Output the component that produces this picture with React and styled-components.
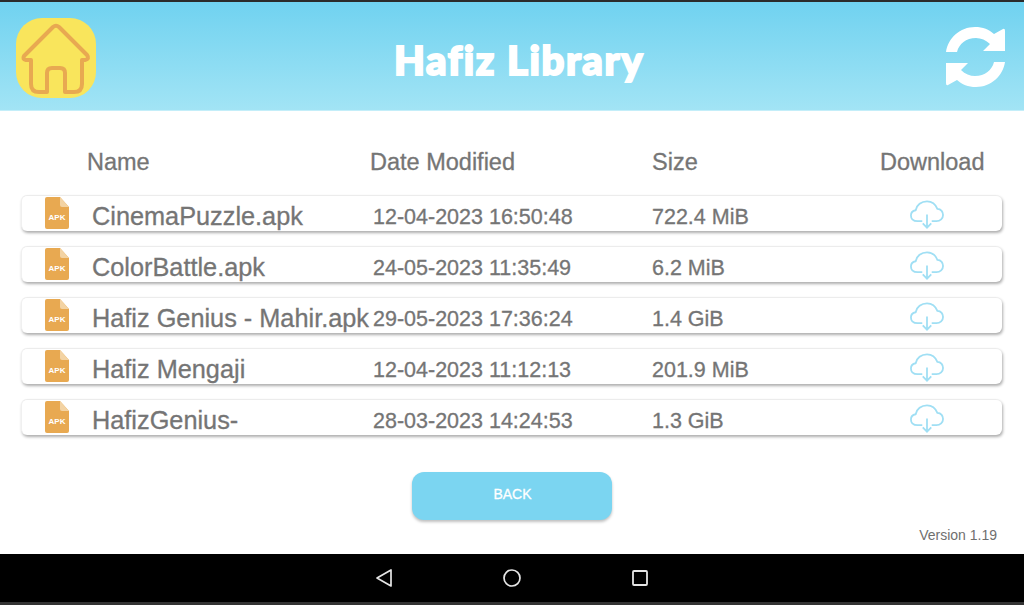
import React from "react";
import styled, { createGlobalStyle } from "styled-components";

const colors = {
  sky: "#7bd5f1",
  grey: "#757575",
  orange: "#e8a951",
  cloud: "#a0dff4",
};

const files = [
  { name: "CinemaPuzzle.apk", date: "12-04-2023 16:50:48", size: "722.4 MiB" },
  { name: "ColorBattle.apk", date: "24-05-2023 11:35:49", size: "6.2 MiB" },
  { name: "Hafiz Genius - Mahir.apk", date: "29-05-2023 17:36:24", size: "1.4 GiB" },
  { name: "Hafiz Mengaji", date: "12-04-2023 11:12:13", size: "201.9 MiB" },
  { name: "HafizGenius-", date: "28-03-2023 14:24:53", size: "1.3 GiB" },
];

const GlobalStyle = createGlobalStyle`
  html, body {
    margin: 0;
    padding: 0;
    background: #fff;
  }
  * {
    box-sizing: border-box;
  }
`;

const Page = styled.div`
  width: 1024px;
  height: 605px;
  display: flex;
  flex-direction: column;
  overflow: hidden;
  font-family: "Liberation Sans", Arial, sans-serif;
  color: ${colors.grey};
  border-top: 2px solid #2b2b2b;
`;

const Header = styled.header`
  height: 109px;
  flex: none;
  padding: 0 16px;
  display: flex;
  align-items: flex-start;
  justify-content: space-between;
  background: linear-gradient(#70d2f0, #a2e4f5);
  border-bottom: 1px solid #c4eef9;
`;

const HomeButton = styled.div`
  width: 80px;
  height: 80px;
  margin-top: 16px;
  border-radius: 26px;
  background: #f9e55c;
`;

const Title = styled.h1`
  margin: 34px 4px 0 0;
  font-family: Lato, "Noto Sans", sans-serif;
  font-weight: 900;
  font-size: 40px;
  line-height: 48px;
  letter-spacing: 1.6px;
  color: #fff;
  -webkit-text-stroke: 2px #fff;
`;

const RefreshButton = styled.div`
  width: 59px;
  height: 60px;
  margin: 25px 3px 0 0;
`;

const Main = styled.main`
  flex: 1;
  display: flex;
  flex-direction: column;
  padding: 0 21px;
`;

const HeadRow = styled.div`
  height: 84px;
  flex: none;
  display: grid;
  grid-template-columns: 283px 282px 228px 1fr;
  align-items: end;
  padding: 0 0 17px 66px;
  font-size: 23.5px;
  line-height: 32px;
  -webkit-text-stroke: 0.3px ${colors.grey};
`;

const List = styled.div`
  display: flex;
  flex-direction: column;
  gap: 15px;
`;

const Row = styled.div`
  height: 36px;
  margin-right: 1px;
  display: grid;
  grid-template-columns: 47px 281px 279px 1fr 151px;
  align-items: start;
  overflow: hidden;
  padding-left: 23px;
  background: #fff;
  border-radius: 6px;
  border-top: 1px solid #ececec;
  border-left: 1px solid #f0f0f0;
  box-shadow: 1px 2px 3px rgba(0, 0, 0, 0.32);
`;

const IconCell = styled.div`
  height: 33px;
  padding-top: 1px;
`;

const Name = styled.div`
  font-size: 25.3px;
  line-height: 36px;
  padding-top: 2px;
  white-space: nowrap;
  -webkit-text-stroke: 0.3px ${colors.grey};
`;

const Cell = styled.div`
  font-size: 21.5px;
  line-height: 36px;
  padding-top: 3px;
  white-space: nowrap;
  -webkit-text-stroke: 0.3px ${colors.grey};
`;

const CloudCell = styled.div`
  display: flex;
  justify-content: center;
  padding-top: 4px;
`;

const Footer = styled.div`
  flex: 1;
  display: flex;
  flex-direction: column;
  align-items: center;
  padding-top: 37px;
`;

const BackButton = styled.button`
  width: 200px;
  height: 48px;
  border: 0;
  border-radius: 12px;
  background: ${colors.sky};
  color: #fff;
  font-family: inherit;
  font-size: 14px;
  padding: 0 0 4px 1px;
  box-shadow: 0 2px 3px rgba(0, 0, 0, 0.25);
  -webkit-text-stroke: 0.3px #fff;
`;

const Version = styled.div`
  align-self: flex-end;
  margin: 6px 6px 0 0;
  font-size: 14px;
  line-height: 18px;
  color: #6f6f6f;
`;

const NavBar = styled.nav`
  height: 51px;
  flex: none;
  background: #000;
  border-bottom: 3px solid #333;
  display: grid;
  grid-template-columns: repeat(3, 24px);
  justify-content: center;
  justify-items: center;
  column-gap: 104px;
  align-items: center;
`;

const HomeIcon = () => (
  <svg width="80" height="80" viewBox="0 0 80 80" fill="none">
    <path
      d="M15 42 H10 Q6 41 8 38 L37 9 Q40 6.5 43 9 L71 37 Q74 41 69 42 H66 V66 Q66 74 58 74 H49 V55 Q49 50 44 50 H36 Q31 50 31 55 V74 H23 Q15 74 15 66 Z"
      stroke={colors.orange}
      strokeWidth="4"
      strokeLinejoin="round"
    />
  </svg>
);

const REFRESH_ARC =
  "M0 25 C2 11 14 0 29 0 C37 0 43 2.5 48 7 L57 2 Q59 1 59 4 V24 H37 L44 17 C40 13 35 11 30 11 C20 11 13 17 11 25 Z";

const RefreshIcon = () => (
  <svg width="59" height="60" viewBox="0 0 59 60" fill="#fff">
    <path d={REFRESH_ARC} />
    <path d={REFRESH_ARC} transform="rotate(180 29.5 30)" />
  </svg>
);

const ApkIcon = () => (
  <svg width="24" height="32" viewBox="0 0 24 32">
    <path d="M2 0 H15 L24 10 V30 Q24 32 22 32 H2 Q0 32 0 30 V2 Q0 0 2 0 Z" fill={colors.orange} />
    <path d="M15 0 L24 10 H17 Q15 10 15 8 Z" fill="#f3d3a3" />
    <text x="12" y="23" textAnchor="middle" fontFamily="Liberation Sans" fontWeight="700" fontSize="8" fill="#fff">
      APK
    </text>
  </svg>
);

const CloudIcon = () => (
  <svg width="34" height="29" viewBox="0 0 36 30" fill="none" stroke={colors.cloud} strokeWidth="1.9">
    <path d="M13 22 H8 C3 22 1 19 1 16 C1 13 3 11 6 10.5 C7 5 12 1 18 1 C23 1 27 4 29 9 C33 9 35 12.5 35 15.5 C35 19 32 22 28 22 H23" />
    <path d="M18 15 V29 M13.5 24.5 L18 29 L22.5 24.5" />
  </svg>
);

const BackIcon = () => (
  <svg width="18" height="20" viewBox="0 0 18 20" fill="none" stroke="#e6e6e6" strokeWidth="1.7" strokeLinejoin="round">
    <path d="M2 10 L16 2 V18 Z" />
  </svg>
);

const CircleIcon = () => (
  <svg width="18" height="18" viewBox="0 0 18 18" fill="none" stroke="#e6e6e6" strokeWidth="1.7">
    <circle cx="9" cy="9" r="8" />
  </svg>
);

const SquareIcon = () => (
  <svg width="16" height="16" viewBox="0 0 16 16" fill="none" stroke="#e6e6e6" strokeWidth="1.8">
    <rect x="1" y="1" width="14" height="14" rx="1" />
  </svg>
);

const App = () => {
  return (
    <Page>
      <GlobalStyle />
      <Header>
        <HomeButton>
          <HomeIcon />
        </HomeButton>
        <Title>Hafiz Library</Title>
        <RefreshButton>
          <RefreshIcon />
        </RefreshButton>
      </Header>

      <Main>
        <HeadRow>
          <span>Name</span>
          <span>Date Modified</span>
          <span>Size</span>
          <span>Download</span>
        </HeadRow>

        <List>
          {files.map((file) => (
            <Row key={file.date}>
              <IconCell>
                <ApkIcon />
              </IconCell>
              <Name>{file.name}</Name>
              <Cell>{file.date}</Cell>
              <Cell>{file.size}</Cell>
              <CloudCell>
                <CloudIcon />
              </CloudCell>
            </Row>
          ))}
        </List>

        <Footer>
          <BackButton>BACK</BackButton>
          <Version>Version 1.19</Version>
        </Footer>
      </Main>

      <NavBar>
        <BackIcon />
        <CircleIcon />
        <SquareIcon />
      </NavBar>
    </Page>
  );
};

export default App;
